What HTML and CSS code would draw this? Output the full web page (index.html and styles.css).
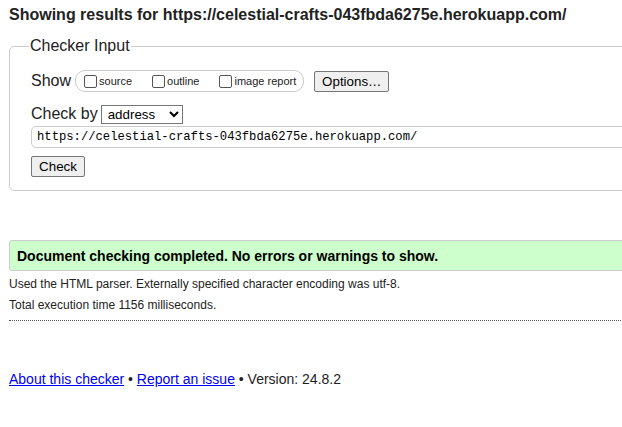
FILE: index.html
```html
<!DOCTYPE html>
<html lang="en">
<head>
<meta charset="utf-8">
<title>Showing results for https://celestial-crafts-043fbda6275e.herokuapp.com/ - Nu Html Checker</title>
<link rel="stylesheet" href="styles.css">
</head>
<body>
<h2 class="title">Showing results for https://celestial-crafts-043fbda6275e.herokuapp.com/</h2>
<form class="form">
  <fieldset class="fs">
    <legend class="legend">Checker Input</legend>
    <div class="row row-show">
      <span class="lbl">Show</span>
      <span class="group">
        <label class="opt"><input type="checkbox" class="cb"><span>source</span></label>
        <label class="opt"><input type="checkbox" class="cb"><span>outline</span></label>
        <label class="opt last"><input type="checkbox" class="cb"><span>image report</span></label>
      </span>
      <button type="button" class="btn btn-options">Options…</button>
    </div>
    <div class="row row-by">
      <span class="lbl">Check by</span>
      <select class="sel"><option>address</option></select>
    </div>
    <div class="row row-url">
      <input class="url" type="text" value="https://celestial-crafts-043fbda6275e.herokuapp.com/">
    </div>
    <div class="row row-check">
      <button type="button" class="btn btn-check">Check</button>
    </div>
  </fieldset>
</form>
<div class="success"><p>Document checking completed. No errors or warnings to show.</p></div>
<p class="details">Used the HTML parser. Externally specified character encoding was utf-8.</p>
<p class="details">Total execution time 1156 milliseconds.</p>
<hr class="dots">
<p class="footer"><a href="#">About this checker</a> • <a href="#">Report an issue</a> • Version: 24.8.2</p>
</body>
</html>
```
FILE: styles.css
```css
html { overflow: hidden; background: #fff; }
body {
  margin: 0;
  padding: 0 0 0 9px;
  width: 720px;
  font-family: "Liberation Sans", Arial, sans-serif;
  color: #222;
}
.title {
  margin: 0;
  padding-top: 6px;
  font-size: 16px;
  line-height: 18px;
  font-weight: bold;
  color: #222;
}
.form { margin: 0; padding-top: 13px; }
.fs {
  margin: 0;
  padding: 0 20px 13px 21px;
  border: 1px solid #ccc;
  border-radius: 5px;
}
.legend {
  font-size: 16px;
  line-height: 18px;
  padding: 0 1px;
  margin-left: -2px;
  color: #222;
}
.row { display: flex; align-items: center; }
.lbl { font-size: 16px; line-height: 18px; }
.row-show { margin-top: 15px; height: 22px; }
.group {
  display: inline-flex;
  align-items: center;
  margin-left: 4px;
  height: 20px;
  padding: 0 7px 0 8px;
  border: 1px solid #ccc;
  border-radius: 10px;
  font-size: 11px;
}
.opt { display: inline-flex; align-items: center; margin-right: 20px; }
.opt.last { margin-right: 0; }
.cb {
  appearance: none;
  -webkit-appearance: none;
  width: 13px;
  height: 13px;
  margin: 0 2px 0 0;
  border: 1px solid #555;
  border-radius: 2px;
  background: #fff;
}
.btn {
  font-family: "Liberation Sans", Arial, sans-serif;
  font-size: 13.33px;
  color: #000;
  background: #efefef;
  border: 1px solid #767676;
  border-radius: 2px;
  padding: 0 8px;
  height: 21px;
  line-height: 19px;
}
.btn-options { margin-left: 10px; width: 75px; padding: 0; }
.row-by { margin-top: 12px; height: 20px; }
.sel {
  margin-left: 3px;
  width: 82px;
  height: 19px;
  font-family: "Liberation Sans", Arial, sans-serif;
  font-size: 13.33px;
  color: #000;
  border: 1px solid #767676;
  border-radius: 0;
  background: #fff;
  padding: 0 0 0 2px;
}
.row-url { margin-top: 2px; }
.url {
  width: 100%;
  box-sizing: border-box;
  height: 22px;
  font-family: "Liberation Mono", "DejaVu Sans Mono", monospace;
  font-size: 12.2px;
  color: #000;
  border: 1px solid #ccc;
  border-radius: 5px;
  padding: 0 5px;
  margin: 0;
}
.row-check { margin-top: 8px; }
.btn-check { width: 54px; padding: 0; }
.success {
  margin-top: 49px;
  height: 29px;
  border: 1px solid #ccc;
  border-radius: 3px;
  background: #ccffcc;
  display: flex;
  align-items: center;
  padding-left: 7px;
}
.success p {
  margin: 0;
  font-size: 14px;
  font-weight: bold;
  color: #000;
}
.details {
  margin: 0;
  font-size: 12px;
  line-height: 21px;
}
.success + .details { margin-top: 3px; }
.dots {
  margin: 4px 0 0 0;
  border: 0;
  border-top: 1px dotted #555;
  height: 0;
}
.footer {
  margin: 49px 0 0 0;
  font-size: 14px;
  line-height: 18px;
}
.footer a { color: #00e; }
```
